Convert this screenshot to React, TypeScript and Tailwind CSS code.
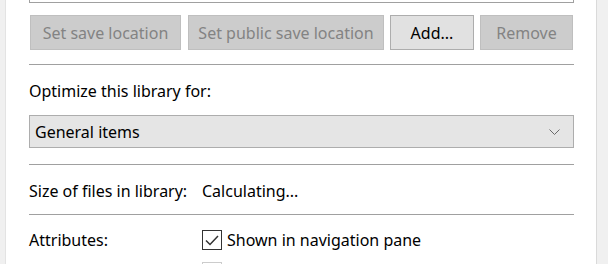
import React from "react";

const font = { fontFamily: '"Noto Sans", "Segoe UI", sans-serif' };

function Btn({ label, disabled, w }: { label: string; disabled?: boolean; w: string }) {
  return (
    <div
      className={`${w} h-[35px] flex items-center justify-center border text-[16px] ${
        disabled
          ? "bg-[#cccccc] border-[#bfbfbf] text-[#838383]"
          : "bg-[#e1e1e1] border-[#adadad] text-black"
      }`}
    >
      {label}
    </div>
  );
}

export default function App() {
  return (
    <div
      className="w-[608px] h-[264px] overflow-hidden bg-white flex text-black"
      style={font}
    >
      {/* window edge */}
      <div className="w-[6px] shrink-0 bg-[#f0f0f0] border-r border-[#e3e3e3]" />

      <div className="flex-1 pl-[23px]">
        <div className="w-[545px]">
          {/* list box bottom */}
          <div className="h-[3px] border-x border-b border-[#a0a0a0]" />

          {/* buttons */}
          <div className="flex gap-[6px] pl-[1px] mt-[12px]">
            <Btn label="Set save location" disabled w="w-[151px]" />
            <Btn label="Set public save location" disabled w="w-[196px] ml-[1px]" />
            <Btn label="Add..." w="w-[84px]" />
            <Btn label="Remove" disabled w="w-[93px]" />
          </div>

          <div className="h-px bg-[#a0a0a0] mt-[14px]" />

          <div className="text-[16px] leading-[20px] mt-[16px]">
            Optimize this library for:
          </div>

          {/* dropdown */}
          <div className="mt-[14px] h-[33px] bg-[#e5e5e5] border border-[#adadad] flex items-center justify-between pl-[5px] pr-[13px] text-[16px]">
            <span>General items</span>
            <svg width="11" height="6" viewBox="0 0 11 6" fill="none">
              <path d="M0.5 0.5 L5.5 5.5 L10.5 0.5" stroke="#6a6a6a" strokeWidth="1" />
            </svg>
          </div>

          <div className="h-px bg-[#a0a0a0] mt-[16px]" />

          <div className="flex items-center h-[20px] mt-[16px] text-[16px]">
            <span className="w-[173px]">Size of files in library:</span>
            <span>Calculating...</span>
          </div>

          <div className="h-px bg-[#a0a0a0] mt-[13px]" />

          <div className="flex items-start mt-[15px] text-[16px]">
            <span className="w-[173px] leading-[20px]">Attributes:</span>
            <div className="flex flex-col gap-[12px]">
              <div className="flex items-center gap-[5px]">
                <div className="w-[20px] h-[20px] border border-[#333333] bg-white flex items-center justify-center">
                  <svg width="14" height="11" viewBox="0 0 14 11" fill="none">
                    <path d="M1 5.5 L5 9.5 L13 1" stroke="#333333" strokeWidth="1.5" />
                  </svg>
                </div>
                <span className="leading-[20px]">Shown in navigation pane</span>
              </div>
              <div className="flex items-center gap-[5px]">
                <div className="w-[20px] h-[20px] border border-[#cccccc] bg-white" />
              </div>
            </div>
          </div>
        </div>
      </div>

      {/* scrollbar */}
      <div className="w-[12px] shrink-0 bg-[#f0f0f0] border-l border-[#dadada]" />
    </div>
  );
}
